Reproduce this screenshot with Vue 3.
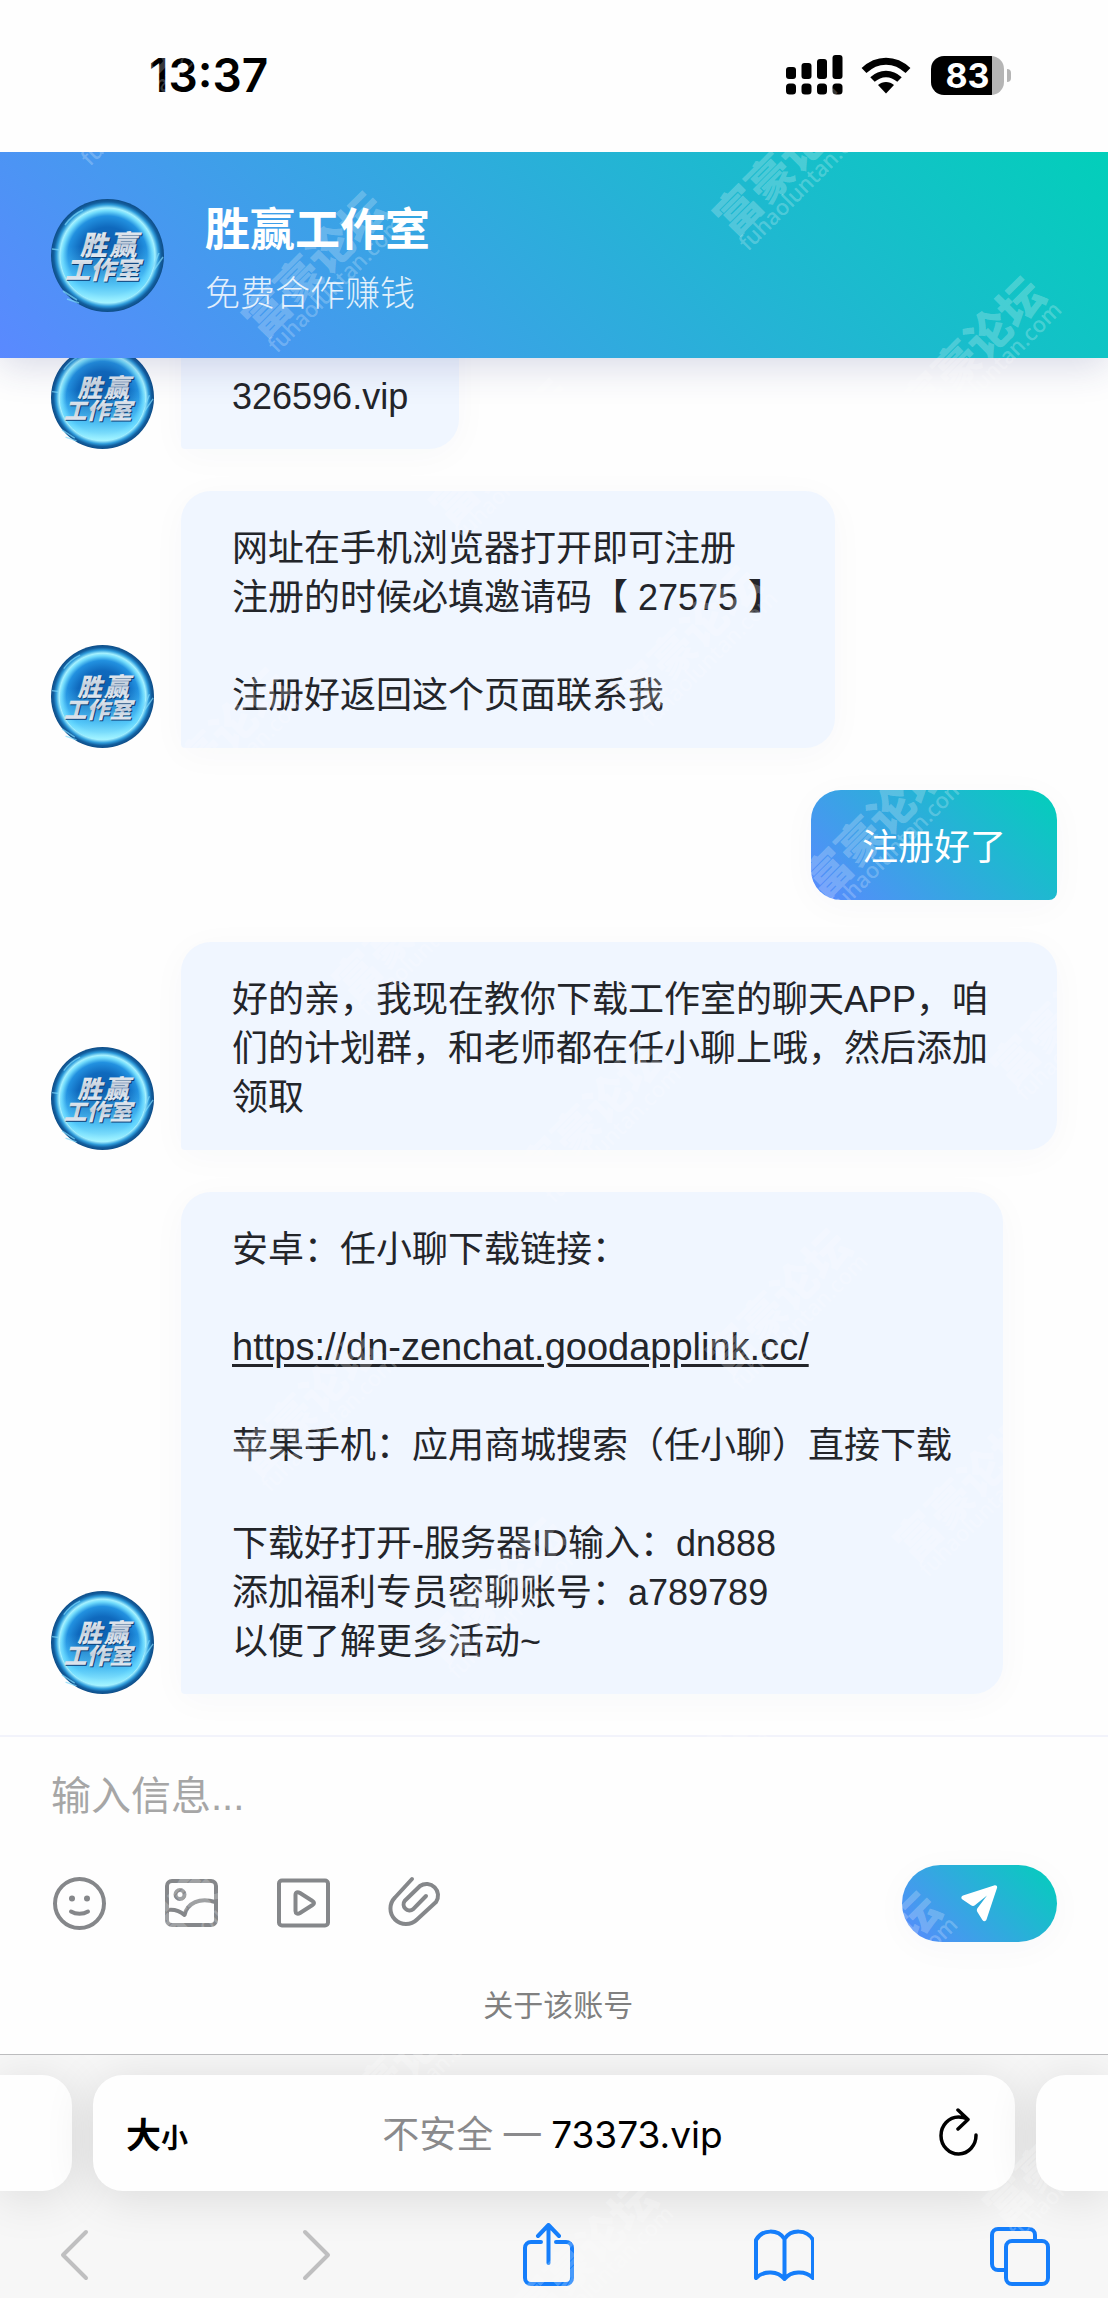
<template>
  <div class="phone">
    <!-- Shared shapes -->
    <svg class="defs" width="0" height="0" aria-hidden="true">
      <defs>
        <radialGradient id="orb" cx="50%" cy="50%" r="50%">
          <stop offset="0" stop-color="#0b5cab" />
          <stop offset="0.5" stop-color="#0f69bd" />
          <stop offset="0.7" stop-color="#2291e0" />
          <stop offset="0.79" stop-color="#6fdafc" />
          <stop offset="0.84" stop-color="#a5f1ff" />
          <stop offset="0.9" stop-color="#2f9cdb" />
          <stop offset="0.95" stop-color="#125f9f" />
          <stop offset="1" stop-color="#0e4c86" />
        </radialGradient>
        <linearGradient id="glow" x1="0" y1="0" x2="0" y2="1">
          <stop offset="0.4" stop-color="#4fc4fb" stop-opacity="0" />
          <stop offset="0.8" stop-color="#5fd4ff" stop-opacity="0.8" />
          <stop offset="1" stop-color="#a5f4ff" stop-opacity="0.95" />
        </linearGradient>
        <linearGradient id="metal" x1="0" y1="0" x2="0" y2="1">
          <stop offset="0" stop-color="#ffffff" />
          <stop offset="0.5" stop-color="#c3cfdd" />
          <stop offset="1" stop-color="#eef4fa" />
        </linearGradient>
        <symbol id="avatar" viewBox="0 0 113 113">
          <circle cx="56.5" cy="56.5" r="56.5" fill="url(#orb)" />
          <circle cx="56.5" cy="57" r="47" fill="url(#glow)" />
          <path d="M1 50l8 1M112 58l-9 13M108 54l-7 16M12 92l14 9M16 100l12 4M14 26c5-7 11-12 18-15" fill="none" stroke="#7ed9fb" stroke-width="1.5" opacity="0.7" />
          <g font-family="'Noto Sans CJK SC', sans-serif" font-weight="900" font-style="italic">
            <text x="30" y="57" font-size="27" fill="#0b3d73">胜</text>
            <text x="59" y="57" font-size="28" fill="#0b3d73">赢</text>
            <text x="15" y="81" font-size="25" fill="#0b3d73">工作室</text>
            <text x="29" y="56" font-size="27" fill="url(#metal)">胜</text>
            <text x="58" y="56" font-size="28" fill="url(#metal)">赢</text>
            <text x="14" y="80" font-size="25" fill="url(#metal)">工作室</text>
          </g>
        </symbol>
      </defs>
    </svg>

    <div class="status-bar">
      <span class="time">13:37</span>
      <div class="status-icons">
        <svg width="57" height="40" viewBox="0 0 57 40">
          <rect x="0" y="12" width="10" height="12" rx="3" />
          <rect x="15.5" y="8" width="10" height="16" rx="3" />
          <rect x="31" y="4" width="10" height="20" rx="3" />
          <rect x="46.5" y="0" width="10" height="24" rx="3" />
          <rect v-for="x in [0, 15.5, 31, 46.5]" :key="x" :x="x" y="28.5" width="10" height="11" rx="3.5" />
        </svg>
        <svg class="wifi" width="50" height="38" viewBox="0 0 50 38">
          <path d="M3 14.5C16 2 34 2 47 14.5" fill="none" stroke="#000" stroke-width="7" />
          <path d="M11.5 23.5c8-7.500 19-7.500 27 0" fill="none" stroke="#000" stroke-width="6.5" />
          <path d="M25 37.5l-8-8.500c4.500-4 11.500-4 16 0z" />
        </svg>
        <div class="battery">
          <span class="battery-level">83</span>
        </div>
        <span class="battery-nub"></span>
      </div>
    </div>

    <header class="chat-header">
      <svg class="header-avatar" role="img" aria-label="胜赢工作室"><use href="#avatar" /></svg>
      <div class="chat-heading">
        <h1 class="chat-title">胜赢工作室</h1>
        <p class="chat-subtitle">免费合作赚钱</p>
      </div>
    </header>

    <main class="messages">
      <div
        v-for="(message, index) in messages"
        :key="index"
        class="message"
        :class="{ own: message.own }"
      >
        <svg v-if="!message.own" class="message-avatar" aria-hidden="true"><use href="#avatar" /></svg>
        <div class="bubble">
          <p v-for="(line, i) in message.lines" :key="i" class="line">
            <a v-if="line.startsWith('https://')" :href="line">{{ line }}</a>
            <template v-else>{{ line }}</template>
          </p>
        </div>
      </div>
    </main>

    <form class="composer" @submit.prevent="send">
      <input v-model="draft" class="composer-input" type="text" placeholder="输入信息..." aria-label="输入信息" />
      <div class="composer-tools">
        <button type="button" class="tool" aria-label="表情">
          <svg viewBox="0 0 56 56">
            <circle cx="28.5" cy="28.5" r="24.5" />
            <path d="M20 36.500c5 3 12 3 17 0" />
            <g class="dots"><circle cx="21" cy="23.500" r="3" /><circle cx="36" cy="23.500" r="3" /></g>
          </svg>
        </button>
        <button type="button" class="tool" aria-label="图片">
          <svg viewBox="0 0 56 56">
            <rect x="4" y="6" width="49" height="44" rx="5" />
            <circle cx="17" cy="19.5" r="4.5" />
            <path d="M4 35c7-1 12 0 17.500 5 3-12 15-18 31-13" />
          </svg>
        </button>
        <button type="button" class="tool" aria-label="视频">
          <svg viewBox="0 0 56 56">
            <rect x="4" y="5.5" width="49" height="45" rx="3" />
            <path d="M20.500 20c0-3 2-3.500 4.500-2l12.500 8c2 1.200 2 2.800 0 4L25 38c-2.500 1.500-4.500.5-4.500-2z" />
          </svg>
        </button>
        <button type="button" class="tool" aria-label="附件">
          <svg viewBox="0 0 56 56">
            <path d="M25 4L8 22.500a15.500 15.500 0 0 0 22 22L49 27A11.500 11.500 0 0 0 33 11L17.800 25.800a6 6 0 0 0 8.400 8.400L39 21" />
          </svg>
        </button>
        <button type="submit" class="send" aria-label="发送">
          <svg width="37" height="37" viewBox="0 0 37 37">
            <path d="M33 .5L2 10.500c-2 .8-2.200 3-.5 4L10 20.300c1.500 1 3 .8 4.200-.3L26 10.500 16.600 23c-1 1.400-1 2.600-.2 4l5 8c1.200 1.800 3.400 1.600 4.100-.4L36 3c.6-2-.9-3.200-3-2.500z" fill="#fff" />
          </svg>
        </button>
      </div>
      <a class="about" href="#about">&nbsp;关于该账号</a>
    </form>

    <footer class="browser">
      <div class="tabs">
        <div class="tab side left"></div>
        <div class="tab address">
          <button type="button" class="text-size" aria-label="大小"><span>大</span><small>小</small></button>
          <button type="button" class="url"><span class="insecure">不安全 — </span>73373.vip</button>
          <button type="button" class="reload" aria-label="重新载入">
            <svg width="40" height="48" viewBox="0 0 40 48">
              <path d="M37 27a17.500 18.500 0 1 1-17.500-18q5 0 9 2M19 2l10 9.500-10 9.500" />
            </svg>
          </button>
        </div>
        <div class="tab side right"></div>
      </div>
      <nav class="toolbar">
        <button
          v-for="item in toolbar"
          :key="item.label"
          type="button"
          class="toolbar-button"
          :class="{ disabled: item.disabled }"
          :aria-label="item.label"
        >
          <svg width="60" height="64" viewBox="0 0 60 64"><path :d="item.path" /></svg>
        </button>
      </nav>
    </footer>

    <!-- Forum watermark, tiled diagonally over everything -->
    <svg class="watermark" aria-hidden="true">
      <g v-for="mark in marks" :key="mark.id" :transform="`translate(${mark.x} ${mark.y}) rotate(-45)`">
        <text class="mark-name" x="0" y="-20">富豪论坛</text>
        <text class="mark-site" x="0" y="0">fuhaoluntan.com</text>
      </g>
    </svg>
  </div>
</template>

<script setup>
import { ref } from 'vue'

const draft = ref('')

const messages = ref([
  { lines: ['', '326596.vip'] },
  {
    lines: [
      '网址在手机浏览器打开即可注册',
      '注册的时候必填邀请码【 27575 】',
      '',
      '注册好返回这个页面联系我'
    ]
  },
  { own: true, lines: ['注册好了'] },
  {
    lines: ['好的亲，我现在教你下载工作室的聊天APP，咱们的计划群，和老师都在任小聊上哦，然后添加领取']
  },
  {
    lines: [
      '安卓：任小聊下载链接：',
      '',
      'https://dn-zenchat.goodapplink.cc/',
      '',
      '苹果手机：应用商城搜索（任小聊）直接下载',
      '',
      '下载好打开-服务器ID输入：dn888',
      '添加福利专员密聊账号：a789789',
      '以便了解更多活动~'
    ]
  }
])

const toolbar = [
  { label: '后退', disabled: true, path: 'M42 9L19 32l23 23' },
  { label: '前进', disabled: true, path: 'M24 9l23 23-23 23' },
  {
    label: '共享',
    path: 'M24 19H14a6 6 0 0 0-6 6v30a6 6 0 0 0 6 6h35a6 6 0 0 0 6-6V25a6 6 0 0 0-6-6H39M31.500 40V2M21 13L31.500 2 42 13'
  },
  {
    label: '书签',
    path: 'M2 17C8 6 24 6 30.500 16 37 6 53 6 59 17v38C51 47 37 48 30.500 56 24 48 10 47 2 55zM30.500 16v40'
  },
  {
    label: '标签页',
    path: 'M15 47H8a6 6 0 0 1-6-6V12a6 6 0 0 1 6-6h31a6 6 0 0 1 6 6v6M22 18h30a6 6 0 0 1 6 6v31a6 6 0 0 1-6 6H22a6 6 0 0 1-6-6V24a6 6 0 0 1 6-6z'
  }
]

const marks = []
for (let a = -5; a <= 5; a++) {
  for (let b = -5; b <= 16; b++) {
    const x = 277 + a * 471 + b * 187
    const y = 354 - a * 102 + b * 187
    if (x > 30 && x < 1040 && y > 160 && y < 2345) {
      marks.push({ id: `${a}:${b}`, x, y })
    }
  }
}

function send() {
  const text = draft.value.trim()
  if (!text) return
  messages.value.push({ own: true, lines: [text] })
  draft.value = ''
}
</script>

<style>
body {
  margin: 0;
}
</style>

<style scoped>
.phone {
  position: relative;
  display: flex;
  flex-direction: column;
  height: 100vh;
  overflow: hidden;
  background: #fefefe;
  color: #23252a;
  font-family: 'Liberation Sans', 'Noto Sans CJK SC', sans-serif;
}

.defs {
  position: absolute;
}

button {
  padding: 0;
  border: 0;
  background: none;
  font: inherit;
  color: inherit;
  cursor: pointer;
}

/* Status bar */
.status-bar {
  position: relative;
  z-index: 2;
  flex: none;
  display: flex;
  align-items: center;
  justify-content: space-between;
  height: 152px;
  padding: 0 97px 2px 149px;
  box-sizing: border-box;
  background: #fefefe;
  color: #000;
  font-family: Inter, sans-serif;
}

.time {
  font-size: 46px;
  font-weight: 600;
}

.status-icons {
  display: flex;
  align-items: center;
}

.wifi {
  margin: 0 20px 0 18px;
}

.battery {
  width: 73px;
  height: 39px;
  border-radius: 13px;
  background: linear-gradient(90deg, #000 83%, #b5b5b5 83%);
  text-align: center;
}

.battery-level {
  color: #fff;
  font-size: 34px;
  font-weight: 700;
  line-height: 39px;
}

.battery-nub {
  width: 4px;
  height: 13px;
  margin-left: 3px;
  border-radius: 0 6px 6px 0;
  background: #b5b5b5;
}

/* Chat header */
.chat-header {
  position: relative;
  z-index: 1;
  flex: none;
  display: flex;
  align-items: center;
  gap: 41px;
  height: 206px;
  padding: 0 51px;
  background: linear-gradient(45deg, #5a89ff, #02cfba);
  box-shadow: 0 8px 36px rgba(40, 50, 120, 0.18);
  color: #fff;
}

.header-avatar {
  width: 113px;
  height: 113px;
}

.chat-heading {
  padding-top: 6px;
}

.chat-title {
  margin: 0;
  font-size: 45px;
  font-weight: 700;
  line-height: 72px;
}

.chat-subtitle {
  margin: 0;
  font-size: 35px;
  font-weight: 300;
  line-height: 54px;
  opacity: 0.85;
}

/* Messages */
.messages {
  flex: 1;
  min-height: 0;
  display: flex;
  flex-direction: column;
  justify-content: flex-end;
  gap: 42px;
  padding: 0 51px 41px;
  overflow: hidden;
}

.message {
  flex: none;
  display: flex;
  align-items: flex-end;
  gap: 27px;
}

.message.own {
  justify-content: flex-end;
}

.message-avatar {
  flex: none;
  width: 103px;
  height: 103px;
}

.bubble {
  padding: 33px 51px 28px;
  border-radius: 30px 30px 30px 4px;
  background: #f0f6ff;
  box-shadow: 0 6px 36px rgba(40, 50, 90, 0.03);
  font-size: 36px;
  line-height: 49px;
}

.own .bubble {
  border-radius: 30px 30px 8px 30px;
  background: linear-gradient(45deg, #5a89ff, #02cfba);
  color: #fff;
}

.line {
  min-height: 49px;
  margin: 0;
}

.line a {
  color: inherit;
  font-size: 38px;
  text-underline-offset: 4px;
}

/* Composer */
.composer {
  flex: none;
  display: flex;
  flex-direction: column;
  padding: 0 51px;
  border-top: 2px solid #f2f3fb;
}

.composer-input {
  height: 118px;
  padding: 0;
  border: 0;
  outline: 0;
  background: none;
  color: #23252a;
  font: inherit;
  font-size: 40px;
}

.composer-input::placeholder {
  color: #a6a6a6;
}

.composer-tools {
  display: flex;
  align-items: center;
  gap: 56px;
  height: 96px;
}

.tool {
  width: 56px;
  height: 56px;
}

.tool svg {
  display: block;
  fill: none;
  stroke: #85878a;
  stroke-width: 4;
  stroke-linecap: round;
  stroke-linejoin: round;
}

.tool .dots {
  fill: #85878a;
  stroke: none;
}

.send {
  display: flex;
  align-items: center;
  justify-content: center;
  width: 155px;
  height: 77px;
  margin-left: auto;
  border-radius: 39px;
  background: linear-gradient(45deg, #5a89ff, #02cfba);
  box-shadow: 0 6px 36px rgba(40, 50, 90, 0.03);
}

.about {
  align-self: center;
  padding: 28px 0 21px;
  color: #808080;
  font-size: 30px;
  line-height: 54px;
  text-decoration: none;
}

/* Browser chrome */
.browser {
  flex: none;
  display: flex;
  flex-direction: column;
  height: 244px;
  box-sizing: border-box;
  border-top: 1px solid #bcbcbe;
  background: #f7f7f7;
  overflow: hidden;
}

.tabs {
  display: flex;
  gap: 21px;
  padding-top: 20px;
}

.tab {
  height: 116px;
  box-sizing: border-box;
  border-radius: 30px;
  background: #fefefe;
  box-shadow: 0 6px 50px rgba(0, 0, 0, 0.12);
}

.side {
  flex: 0 0 72px;
}

.left {
  border-radius: 0 30px 30px 0;
}

.right {
  border-radius: 30px 0 0 30px;
}

.address {
  flex: 1;
  display: grid;
  grid-template-columns: 1fr auto 1fr;
  align-items: center;
  padding: 0 36px 2px 33px;
  color: #000;
}

.text-size {
  justify-self: start;
  font-size: 35px;
  font-weight: 700;
}

.text-size small {
  font-size: 27px;
}

.url {
  font-family: Inter, 'Noto Sans CJK SC', sans-serif;
  font-size: 37px;
  white-space: pre;
}

.insecure {
  color: #8a8a8c;
}

.reload {
  justify-self: end;
}

.reload svg {
  display: block;
  fill: none;
  stroke: #000;
  stroke-width: 3.5;
  stroke-linecap: round;
  stroke-linejoin: round;
}

.toolbar {
  flex: 1;
  display: flex;
  align-items: center;
  justify-content: space-between;
  padding: 20px 58px 0 44px;
}

.toolbar-button svg {
  display: block;
  fill: none;
  stroke: #157efb;
  stroke-width: 4;
  stroke-linecap: round;
  stroke-linejoin: round;
}

.toolbar-button.disabled svg {
  stroke: #bfbfc0;
}

/* Watermark */
.watermark {
  position: absolute;
  inset: 0;
  z-index: 3;
  width: 100%;
  height: 100%;
  pointer-events: none;
  fill: #fff;
  fill-opacity: 0.24;
}

.mark-name {
  font-family: 'Noto Sans CJK SC', sans-serif;
  font-size: 45px;
  font-weight: 900;
}

.mark-site {
  font-family: 'Noto Sans', sans-serif;
  font-size: 22px;
  font-weight: 500;
}
</style>
